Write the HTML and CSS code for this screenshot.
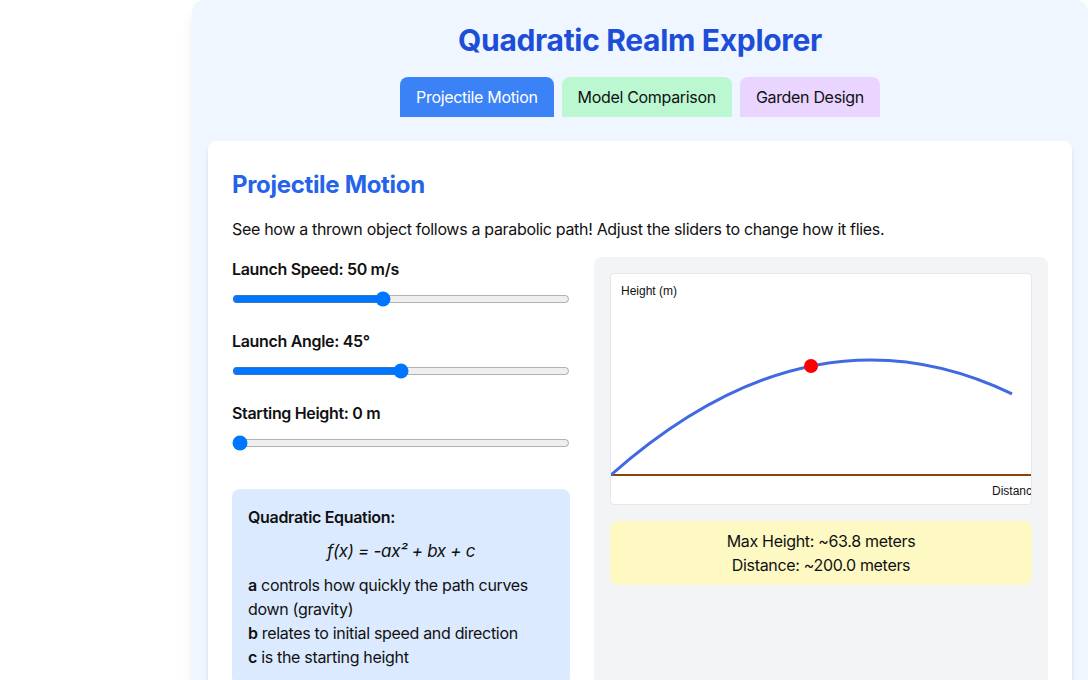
FILE: index.html
```html
<!DOCTYPE html>
<html lang="en">
<head>
    <meta charset="UTF-8">
    <meta name="viewport" content="width=device-width, initial-scale=1.0">
    <title>Quadratic Realm Explorer</title>
    <link rel="stylesheet" href="styles.css">
</head>
<body>
    <div class="app">
        <h1>Quadratic Realm Explorer</h1>
        <div class="tabs">
            <button class="tab tab-blue">Projectile Motion</button>
            <button class="tab tab-green">Model Comparison</button>
            <button class="tab tab-purple">Garden Design</button>
        </div>

        <div class="card">
            <h2>Projectile Motion</h2>
            <p class="intro">See how a thrown object follows a parabolic path! Adjust the sliders to change how it flies.</p>

            <div class="layout">
                <div class="controls">
                    <div class="control">
                        <label for="speed">Launch Speed: 50 m/s</label>
                        <input type="range" id="speed" min="10" max="100" value="50">
                    </div>
                    <div class="control">
                        <label for="angle">Launch Angle: 45°</label>
                        <input type="range" id="angle" min="0" max="90" value="45">
                    </div>
                    <div class="control">
                        <label for="height">Starting Height: 0 m</label>
                        <input type="range" id="height" min="0" max="50" value="0">
                    </div>

                    <div class="equation">
                        <h3>Quadratic Equation:</h3>
                        <p class="formula">f(x) = -ax² + bx + c</p>
                        <p><b>a</b> controls how quickly the path curves down (gravity)</p>
                        <p><b>b</b> relates to initial speed and direction</p>
                        <p><b>c</b> is the starting height</p>
                    </div>
                </div>

                <div class="chart-panel">
                    <div class="chart">
                        <svg width="420" height="230" viewBox="0 0 420 230">
                            <text x="10" y="21" class="axis-label">Height (m)</text>
                            <line x1="0" y1="201" x2="420" y2="201" stroke="#8b4513" stroke-width="2"/>
                            <path d="M0 201 Q200.5 23.6 401 119.8" fill="none" stroke="#4169e1" stroke-width="3"/>
                            <circle cx="200" cy="92" r="7" fill="#ff0000"/>
                            <text x="381" y="221" class="axis-label">Distance (m)</text>
                        </svg>
                    </div>
                    <div class="results">
                        <p>Max Height: ~63.8 meters</p>
                        <p>Distance: ~200.0 meters</p>
                    </div>
                </div>
            </div>
        </div>
    </div>
</body>
</html>
```

FILE: styles.css
```css
body {
    font-family: Inter, "Noto Sans", sans-serif;
    letter-spacing: -0.02em;
    background-color: white;
    margin: 0;
    overflow: hidden;
    color: #111;
}
.app {
    width: 896px;
    margin-left: 192px;
    padding: 22px 16px 16px;
    box-sizing: border-box;
    background-color: #eff6ff;
    border-radius: 12px 12px 0 0;
    box-shadow: 0 10px 15px -3px rgba(0, 0, 0, 0.1), 0 4px 6px -4px rgba(0, 0, 0, 0.1);
    min-height: 700px;
}
h1 {
    margin: 0 0 19px;
    text-align: center;
    font-size: 30px;
    line-height: 36px;
    font-weight: 700;
    color: #1d4ed8;
}
.tabs {
    display: flex;
    justify-content: center;
    gap: 8px;
    margin-bottom: 24px;
}
.tab {
    font-family: inherit;
    letter-spacing: inherit;
    font-size: 16px;
    line-height: 24px;
    padding: 8px 16px;
    border: none;
    border-radius: 8px 8px 0 0;
    color: #111;
    cursor: pointer;
}
.tab-blue {
    background-color: #3b82f6;
    color: white;
}
.tab-green {
    background-color: #bbf7d0;
}
.tab-purple {
    background-color: #e9d5ff;
}
.card {
    background-color: white;
    border-radius: 8px;
    padding: 28px 24px 24px;
    box-shadow: 0 4px 6px -1px rgba(0, 0, 0, 0.1), 0 2px 4px -2px rgba(0, 0, 0, 0.1);
}
h2 {
    margin: 0 0 16px;
    font-size: 24px;
    line-height: 32px;
    font-weight: 700;
    color: #2563eb;
}
.intro {
    margin: 0 0 16px;
    font-size: 16px;
    line-height: 24px;
}
.layout {
    display: grid;
    grid-template-columns: 1fr 454px;
    gap: 24px;
}
.control {
    margin-bottom: 22px;
}
.control label {
    display: block;
    font-weight: 600;
    font-size: 16px;
    line-height: 24px;
    margin-bottom: 10px;
}
.control input {
    display: block;
    width: 100%;
    margin: 0;
    height: 16px;
}
.equation {
    margin-top: 38px;
    background-color: #dbeafe;
    border-radius: 8px;
    padding: 16px;
}
.equation h3 {
    margin: 0;
    font-size: 16px;
    line-height: 24px;
    font-weight: 600;
}
.equation p {
    margin: 0;
    font-size: 16px;
    line-height: 24px;
}
.equation b {
    font-weight: 600;
}
.equation .formula {
    margin: 8px 0;
    text-align: center;
    font-style: italic;
    font-size: 17px;
    line-height: 28px;
}
.chart-panel {
    background-color: #f3f4f6;
    border-radius: 8px;
    padding: 16px;
    min-height: 500px;
}
.chart {
    background-color: white;
    border: 1px solid #e5e7eb;
    border-radius: 4px;
    height: 230px;
    overflow: hidden;
}
.chart svg {
    display: block;
}
.axis-label {
    font-family: "Liberation Sans", Arial, sans-serif;
    font-size: 12px;
    letter-spacing: 0;
    fill: #111;
}
.results {
    margin-top: 16px;
    background-color: #fef9c3;
    border-radius: 8px;
    padding: 8px;
    text-align: center;
}
.results p {
    margin: 0;
    font-size: 16px;
    line-height: 24px;
}
```
